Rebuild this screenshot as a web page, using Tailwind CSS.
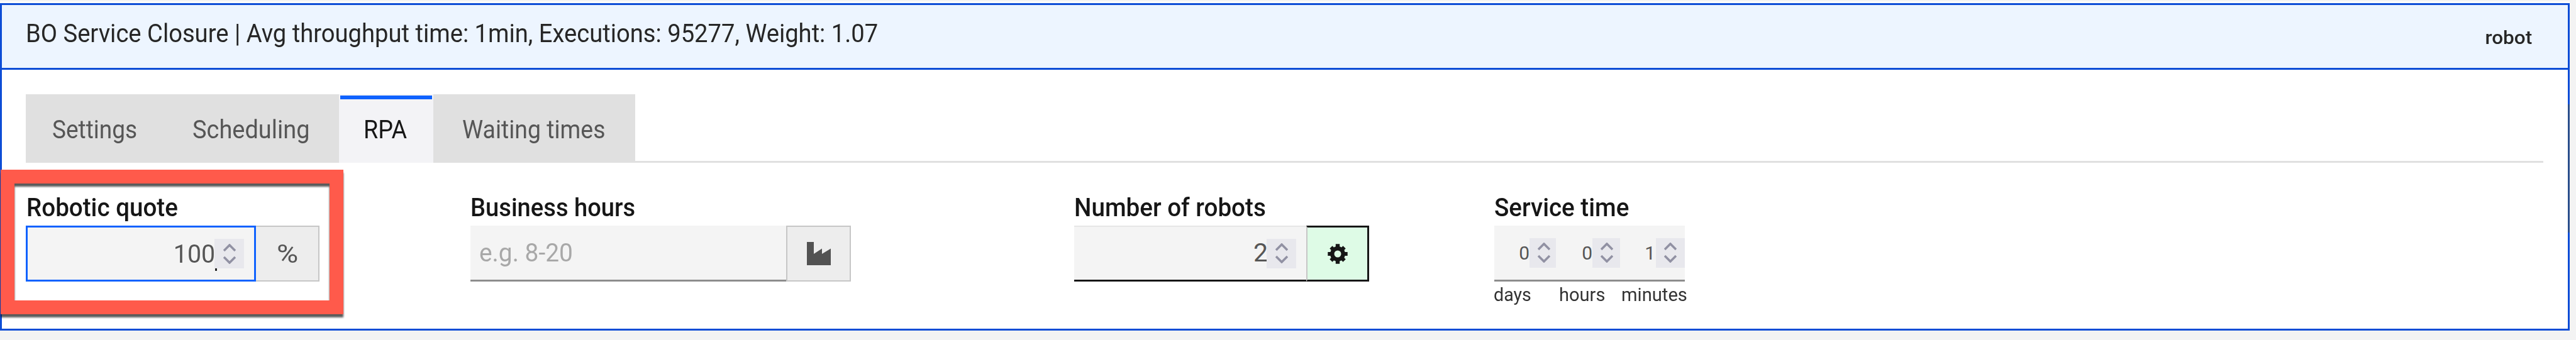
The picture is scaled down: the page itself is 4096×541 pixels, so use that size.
<!DOCTYPE html>
<html lang="en">
<head>
<meta charset="utf-8">
<title>BO Service Closure</title>
<script src="https://cdn.jsdelivr.net/npm/@tailwindcss/browser@4"></script>
</head>
<body class="bg-[#f3f3f3] w-[4096px] h-[541px] overflow-hidden font-['Roboto',sans-serif] text-[#161616] whitespace-nowrap">
<svg class="hidden">
  <symbol id="spin" viewBox="0 0 20 32"><path d="M1 11 L10 2 L19 11 M1 21 L10 30 L19 21" fill="none" stroke="#9191a3" stroke-width="3.6"/></symbol>
</svg>
<main>
  <div class="h-[5px] w-[4086px] border-t-2 border-[#f3f3f3] bg-[#fcfcfc]"></div>
  <section class="relative w-[4086px] h-[521px] border-3 border-[#0d4dd6] bg-white">
    <header class="flex justify-between h-[103px] border-b-3 border-[#0d4dd6] bg-[#edf5ff] pl-[38px] pr-[57px] text-[#262626]">
      <h1 class="mt-[15px] text-[40.5px] leading-[60px] origin-left scale-x-[.942]">BO Service Closure | Avg throughput time: 1min, Executions: 95277, Weight: 1.07</h1>
      <span class="mt-[22px] text-[30px] leading-[60px] font-medium origin-right scale-x-[1.05]">robot</span>
    </header>

    <nav class="ml-[38px] mr-[39px] mt-[39px] h-[109px] flex border-b-3 border-[#e0e0e0] text-[40.5px] leading-[60px] text-[#565656]">
      <div class="w-[225px] h-[109px] bg-[#e0e0e0] pt-[26px] pl-[42px]"><span class="inline-block origin-left scale-x-[.913]">Settings</span></div>
      <div class="w-[273px] h-[109px] bg-[#e0e0e0] pt-[26px] pl-[40px]"><span class="inline-block origin-left scale-x-[.937]">Scheduling</span></div>
      <div class="w-[150px] h-[109px] bg-[#f3f3f6] pt-[2px] px-[2px] text-[#161616]">
        <div class="h-[6px] bg-[#0f62fe]"></div>
        <span class="inline-block mt-[18px] ml-[37px] origin-left scale-x-[.93]">RPA</span>
      </div>
      <div class="w-[321px] h-[109px] bg-[#e0e0e0] pt-[26px] pl-[46px]"><span class="inline-block origin-left scale-x-[.923]">Waiting times</span></div>
    </nav>

    <div class="ml-[38px] mt-[41px] flex text-[41px]">
      <div class="w-[707px]">
        <div class="leading-[60px] h-[59px] font-medium"><span class="inline-block ml-px origin-left scale-x-[.941]">Robotic quote</span></div>
        <div class="flex h-[89px] text-[#565656]">
          <div class="relative w-[366px] border-3 border-[#0f62fe] bg-[#f4f4f4] flex items-center justify-end pr-[16px]">
            <span class="mt-[3px] origin-right scale-x-[.96] mr-[-1px]">100</span>
            <span class="w-[47px] h-[47px] bg-[#e8e8ed] flex items-center justify-center"><svg class="w-[20px] h-[32px]"><use href="#spin"/></svg></span>
            <i class="absolute left-[298px] top-[65px] w-[3px] h-[4px] bg-[#262626]"></i>
          </div>
          <div class="w-[101px] border-2 border-l-0 border-[#c6c6c6] bg-[#ededed] flex items-center justify-center"><span class="mt-[3px] ml-[2px] scale-x-[1.14]">%</span></div>
        </div>
      </div>

      <div class="w-[960px]">
        <div class="leading-[60px] h-[59px] font-medium"><span class="inline-block origin-left scale-x-[.93]">Business hours</span></div>
        <div class="flex h-[89px]">
          <div class="w-[502px] border-b-3 border-[#8d8d8d] bg-[#f4f4f4] pl-[14px] pt-[13px] leading-[60px] text-[#a8a8a8]"><span class="inline-block origin-left scale-x-[.948]">e.g. 8-20</span></div>
          <div class="w-[103px] border-2 border-[#c6c6c6] bg-[#ededed] flex items-center justify-center">
            <svg class="w-[38px] h-[37px]" viewBox="0 0 38 37"><path d="M0 37V0H11V19L24 10.500V19L38 10.500V37Z" fill="#525252"/></svg>
          </div>
        </div>
      </div>

      <div class="w-[668px]">
        <div class="leading-[60px] h-[59px] font-medium"><span class="inline-block origin-left scale-x-[.942]">Number of robots</span></div>
        <div class="flex h-[89px]">
          <div class="w-[369px] border-b-3 border-b-[#161616] border-t-2 border-t-[#e6e6e6] bg-[#f4f4f4] flex items-center justify-end pr-[16px] text-[#565656]">
            <span class="mt-[-1px] mr-[-2px]">2</span>
            <span class="w-[47px] h-[47px] bg-[#e8e8ed] flex items-center justify-center"><svg class="w-[20px] h-[32px]"><use href="#spin"/></svg></span>
          </div>
          <div class="w-[100px] border-3 border-[#161616] border-l-2 border-l-[#c6c6c6] bg-[#defbe6] flex items-center justify-center">
            <svg class="w-[32px] h-[32px]" viewBox="-16 -16 32 32" fill="#161616">
              <path d="M-3.200-15.700H3.200V-9H-3.200ZM-3.200 9H3.200V15.700H-3.200ZM-15.700-3H-9V3H-15.700ZM9-3H15.700V3H9Z"/>
              <path transform="rotate(45)" d="M-3-15H3V-9H-3ZM-3 9H3V15H-3ZM-15-3H-9V3H-15ZM9-3H15V3H9Z"/>
              <circle r="8.700" fill="none" stroke="#161616" stroke-width="6.400"/>
            </svg>
          </div>
        </div>
      </div>

      <div class="w-[310px]">
        <div class="leading-[60px] h-[59px] font-medium"><span class="inline-block origin-left scale-x-[.941]">Service time</span></div>
        <div class="flex items-center w-[303px] h-[89px] border-b-3 border-[#8d8d8d] bg-[#f4f4f4] text-[30px] text-[#565656]">
          <div class="w-[98px] flex items-center justify-end"><span>0</span><span class="w-[42px] h-[47px] bg-[#e8e8ed] flex items-center justify-center"><svg class="w-[20px] h-[32px] ml-[4px]"><use href="#spin"/></svg></span></div>
          <div class="w-[102px] flex items-center justify-end"><span>0</span><span class="w-[44px] h-[47px] bg-[#e8e8ed] flex items-center justify-center"><svg class="w-[20px] h-[32px] ml-[2px]"><use href="#spin"/></svg></span></div>
          <div class="w-[103px] flex items-center justify-end"><span>1</span><span class="w-[46px] h-[47px] ml-px bg-[#e8e8ed] flex items-center justify-center"><svg class="w-[20px] h-[32px]"><use href="#spin"/></svg></span></div>
        </div>
        <div class="mt-px flex leading-[40px] text-[30px] text-[#333]">
          <div class="w-[104px]"><span class="inline-block ml-[-1px] origin-left scale-x-[.955]">days</span></div>
          <div class="w-[100px]"><span class="inline-block origin-left scale-x-[.968]">hours</span></div>
          <div><span class="inline-block origin-left scale-x-[.972]">minutes</span></div>
        </div>
      </div>
    </div>

    <div class="absolute left-[-2px] top-[262px] w-[545px] h-[230px] border-[22.500px] border-[#ff5a4b] drop-shadow-[0_5px_1.500px_rgba(0,0,0,.65)]"></div>
    <div class="absolute right-[-3px] top-[158px] w-[3px] h-[204px] bg-[#2b4f8c]"></div>
  </section>
</main>
</body>
</html>
